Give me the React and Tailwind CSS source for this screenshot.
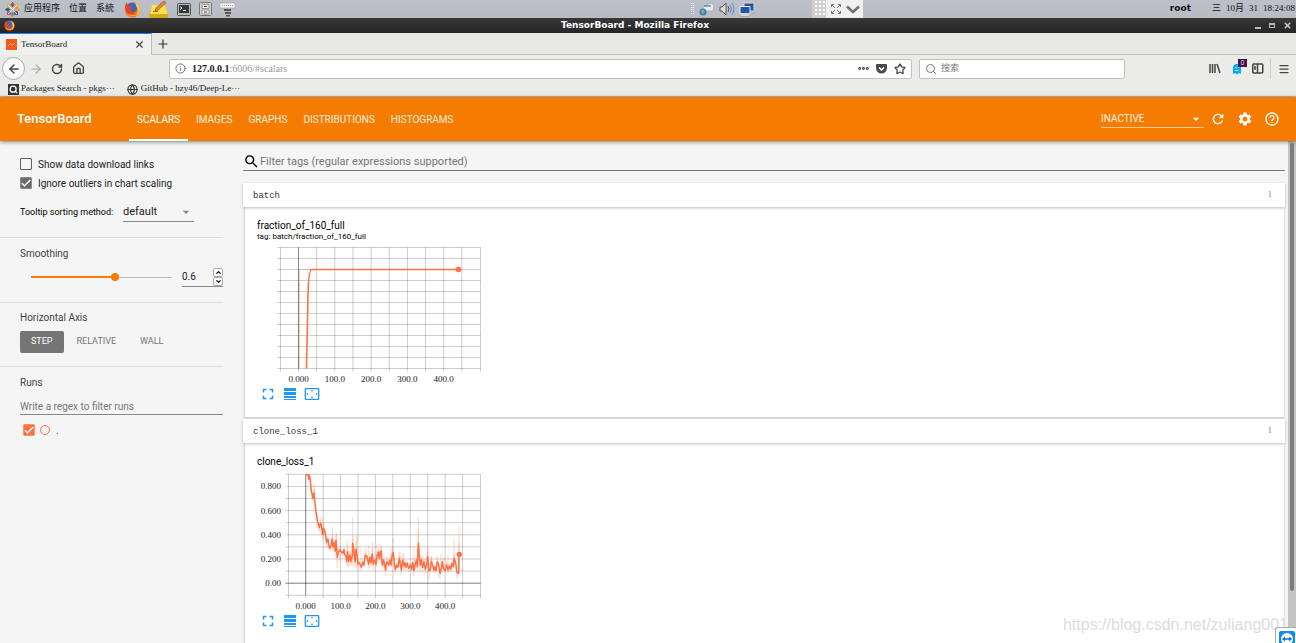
import React, { useState } from 'react';
import clsx from 'clsx';
import {
    MdArrowDropDown,
    MdCheck,
    MdFullscreen,
    MdHelpOutline,
    MdRefresh,
    MdSearch,
    MdSettings,
    MdSettingsOverscan,
} from 'react-icons/md';
import {
    ArrowLeft,
    ArrowRight,
    ChevronDown,
    ChevronUp,
    Ellipsis,
    Globe,
    House,
    Info,
    Menu,
    Plus,
    RotateCw,
    Search,
    Star,
    X,
} from 'lucide-react';

const TABS = ['SCALARS', 'IMAGES', 'GRAPHS', 'DISTRIBUTIONS', 'HISTOGRAMS'];

// Smoothed loss, three units to the pixel
const LOSS = [
    [197, 165], [205, 165], [206, 177], [208, 165], [211, 180], [213, 205], [217, 225], [218, 235],
    [222, 218], [224, 240], [228, 275], [233, 305], [238, 323], [241, 310], [244, 315], [248, 343],
    [250, 325], [253, 330], [257, 345], [260, 367], [264, 357], [266, 375], [270, 385], [274, 375],
    [276, 357], [279, 380], [282, 367], [286, 393], [288, 361], [292, 412], [295, 397], [300, 390],
    [308, 400], [312, 389], [314, 403], [318, 407], [320, 424], [323, 395], [326, 425], [330, 405],
    [333, 425], [337, 405], [338, 370], [342, 393], [345, 425], [348, 387], [351, 403], [354, 432],
    [358, 428], [364, 442], [369, 427], [372, 435], [376, 405], [381, 410], [386, 432], [390, 412],
    [393, 428], [397, 402], [400, 432], [405, 420], [408, 432], [411, 408], [415, 397], [418, 415],
    [421, 395], [424, 393], [425, 420], [428, 435], [431, 420], [437, 450], [440, 425], [446, 435],
    [450, 420], [453, 435], [457, 402], [460, 398], [463, 430], [466, 448], [470, 435], [474, 442],
    [478, 415], [481, 430], [484, 450], [488, 420], [491, 438], [495, 428], [498, 442], [502, 430],
    [506, 445], [512, 435], [515, 448], [518, 428], [522, 452], [526, 430], [530, 420], [532, 440],
    [535, 370], [538, 405], [541, 435], [544, 420], [548, 442], [552, 425], [556, 448], [560, 435],
    [563, 410], [567, 452], [571, 450], [574, 424], [578, 435], [582, 450], [585, 440], [588, 452],
    [592, 425], [596, 435], [600, 460], [605, 440], [607, 425], [610, 445], [615, 452], [620, 435],
    [624, 450], [628, 438], [632, 448], [636, 430], [640, 440], [642, 415], [647, 428], [651, 458],
    [656, 460], [657, 403], [659, 403],
];

// Single-step outliers of the raw series
const SPIKES = [
    [223, 193], [244, 290], [251, 295], [277, 320], [290, 338], [301, 370], [322, 360], [338, 293],
    [350, 345], [363, 385], [386, 375], [398, 365], [411, 370], [424, 375], [458, 353], [480, 398],
    [492, 400], [522, 378], [535, 293], [548, 405], [563, 385], [574, 410], [603, 400], [613, 410],
    [624, 405], [642, 360], [657, 320],
];

const RAW = LOSS.map(([x, y], i) => {
    const prev = i ? LOSS[i - 1][1] : y;
    return [x, Math.max(163, Math.min(478, y + (y - prev) * 0.6))];
});

const toPath = (points) => 'M' + points.map((p) => p.join(' ')).join('L');

function Chart({ left, zeroX, stepX, top, stepY, rows, zeroRow, yLabels = [], label, children }) {
    const right = 223.5;
    const bottom = top + stepY * rows;
    const xs = [left];
    for (let x = zeroX; x < right - 4; x += stepX) xs.push(x);
    xs.push(right);
    return (
        <svg className="mt-1 block" width="228" height="141" role="img" aria-label={label}>
            <g stroke="#000" strokeOpacity="0.2">
                {xs.map((x) => (
                    <path key={x} d={`M${x} ${top}V${bottom + 3}`} />
                ))}
                {Array.from({ length: rows + 1 }, (_, i) => (
                    <path key={i} d={`M${left - 3} ${top + i * stepY}H${right}`} />
                ))}
            </g>
            <g stroke="#000" strokeOpacity="0.35">
                <path d={`M${zeroX} ${top}V${bottom}`} />
                {zeroRow && <path d={`M${left - 3} ${top + zeroRow * stepY}H${right}`} />}
            </g>
            {children}
            <g className="fill-[#222] font-['Liberation_Serif',serif] text-[9px]">
                {['0.000', '100.0', '200.0', '300.0', '400.0'].map((t, i) => (
                    <text key={t} x={zeroX + i * 2 * stepX} y="137" textAnchor="middle">{t}</text>
                ))}
                {yLabels.map((t, i) => (
                    <text key={t} x="24" y={top + (1 + 2 * i) * stepY + 3} textAnchor="end">{t}</text>
                ))}
            </g>
        </svg>
    );
}

function ChartButtons() {
    return (
        <div className="flex h-4 items-center text-[#2196f3]">
            <button aria-label="Toggle fullscreen" className="flex w-[22px] justify-center">
                <MdFullscreen className="size-[18px]" />
            </button>
            <button aria-label="Toggle log scale" className="flex w-[22px] justify-center">
                <svg width="12" height="12" fill="currentColor">
                    <path d="M0 0h12v3H0zM0 4h12v3H0zM0 8h12v2H0zM0 11h12v1H0z" />
                </svg>
            </button>
            <button aria-label="Fit domain to data" className="flex w-[22px] justify-center">
                <MdSettingsOverscan className="size-4" />
            </button>
        </div>
    );
}

function Panel({ name, children, className }) {
    return (
        <section className={className}>
            <h2 className="relative flex h-6 items-center justify-between bg-white pt-[3px] pr-[13px] pl-[10px] font-['Liberation_Mono',monospace] text-[9px] text-[#333] shadow-[0_1px_3px_rgba(0,0,0,0.25)]">
                {name}
                <span className="pb-[3px] font-['Liberation_Serif',serif] text-[#888]">1</span>
            </h2>
            <div className="mx-px h-[210px] border-l border-[#ddd] bg-white pt-3 pl-3 text-black shadow-[0_1px_2px_rgba(0,0,0,0.2)]">
                {children}
            </div>
        </section>
    );
}

function Checkbox({ label, checked = false, accent = false, children }) {
    const [on, setOn] = useState(checked);
    return (
        <label className="flex h-3 items-center text-[10px]">
            <span className="grid size-3 shrink-0">
                <input
                    type="checkbox"
                    aria-label={label}
                    checked={on}
                    onChange={(e) => setOn(e.target.checked)}
                    className={clsx(
                        'col-start-1 row-start-1 size-3 appearance-none rounded-[1px] border',
                        accent ? 'border-[#ff7043] checked:bg-[#ff7043]' : 'border-[#616161] checked:bg-[#6b6b6b]'
                    )}
                />
                {on && <MdCheck className="pointer-events-none col-start-1 row-start-1 size-3 text-white" strokeWidth="1" stroke="currentColor" />}
            </span>
            {children}
        </label>
    );
}

function FirefoxIcon({ size }) {
    return (
        <svg width={size} height={size} viewBox="0 0 16 16">
            <circle cx="8" cy="8.3" r="7.2" fill="#f6701c" />
            <circle cx="7.500" cy="6.500" r="4.800" fill="#2b6cc9" />
            <path d="M11 1.500c5 3 5.500 9 1 12.500-1-2 1.500-3 .8-6.500-.3-2-2.300-3-1.800-6z" fill="#ffcb2e" />
            <path d="M1 5c.500-2 1-3 1.500-3.500L3.500 4l3 .5L8 7l-2 1c.500 2 3 2.500 5 1.500-1 3-4 4-6 3C2 11 .500 8 1 5z" fill="#e8402a" />
            <path d="M2.500 12c3 3 8 3.500 11 0-2 1-4 1.500-6 1.200-2-.2-3.500-.7-5-1.200z" fill="#ffa51f" />
        </svg>
    );
}

function DesktopBar() {
    return (
        <div className="relative flex h-[18px] items-center bg-linear-to-b from-[#bcc0c9] to-[#b9bbc3] font-['Liberation_Serif','Noto_Sans_CJK_SC',sans-serif] text-[9px] text-[#111]">
            <div className="flex items-center pl-[5px]">
                <svg width="15" height="15" viewBox="0 0 15 15">
                    <path d="M7.500 0l2 2.500-2 3-2-3z" fill="#9b3f93" />
                    <path d="M7.500 15l2-2.500-2-3-2 3z" fill="#7d9e2d" />
                    <path d="M0 7.500l2.500-2 3 2-3 2z" fill="#3d4f9c" />
                    <path d="M15 7.500l-2.500-2-3 2 3 2z" fill="#e9a12b" />
                    <path d="M2 2h3.500l1 4.500L2 5.500z" fill="#a4c639" />
                    <path d="M13 2v3.500L8.500 6.500l1-4.500z" fill="#efa724" />
                    <path d="M2 13V9.500l4.500-1-1 4.500z" fill="#b0509a" />
                    <path d="M13 13H9.500l-1-4.500 4.500 1z" fill="#4659a4" />
                    <path d="M3 3l9 9M12 3l-9 9" stroke="#fff" strokeWidth=".8" />
                </svg>
                <button className="ml-1">应用程序</button>
                <button className="ml-[9px]">位置</button>
                <button className="ml-[9px]">系統</button>
            </div>
            <div className="flex items-center gap-2 pl-[10px]">
                <FirefoxIcon size={17} />
                <svg width="20" height="17" viewBox="0 0 20 17">
                    <path d="M3 5h13l3 9v3H0v-3z" fill="#d9a91a" />
                    <path d="M3 4h13l2.500 9H1z" fill="#ffe14d" />
                    <path d="M6 10l1-3 8-7 2 2-8 7z" fill="#f0862d" stroke="#7a4a1a" strokeWidth=".6" />
                    <path d="M4 11c2-2 3 1 5-1" stroke="#555" fill="none" />
                </svg>
                <svg width="14" height="13" viewBox="0 0 14 13">
                    <rect x=".5" y=".5" width="13" height="12" rx="1" fill="#b8bab5" stroke="#555" />
                    <rect x="2" y="2" width="10" height="8" fill="#2f3a3e" />
                    <path d="M3 3.500l2 1.500-2 1.500M6 7.500h3" stroke="#eee" fill="none" />
                </svg>
                <svg width="13" height="14" viewBox="0 0 13 14">
                    <rect x=".5" y=".5" width="12" height="13" rx="1" fill="#cfd1cc" stroke="#777" />
                    <path d="M3 2.500h7v4H3zM3 8h7v4H3z" fill="#f2f2f0" stroke="#999" />
                    <path d="M5 4.500h3M5 10h3" stroke="#444" />
                </svg>
                <svg width="15" height="15" viewBox="0 0 15 15">
                    <rect y="1" width="15" height="5" rx="1" fill="#f4f4f4" stroke="#999" strokeWidth=".6" />
                    <path d="M2 3.500h11" stroke="#c44" strokeDasharray="1 1" strokeOpacity=".6" />
                    <path d="M4 7h7v2H4zM5 10h6v2H5zM6 13h4v1.500H6z" fill="#555" />
                </svg>
            </div>
            <div className="mr-[415px] ml-auto flex items-center gap-1">
                <svg width="4" height="12">
                    <path d="M.5 0v12M2.500 0v12" stroke="#eee" strokeDasharray="1 1" />
                </svg>
                <svg width="16" height="14" viewBox="0 0 16 14">
                    <path d="M4 5l8-4 3 2-1 6H4z" fill="#e8eaea" stroke="#999" strokeWidth=".6" />
                    <path d="M5 4h7" stroke="#5a8fc0" strokeWidth="1.500" />
                    <circle cx="4" cy="10" r="3.500" fill="#3f7fbf" />
                    <path d="M2 9l2-1.500 1.500 2L4 12z" fill="#8fc04a" />
                </svg>
                <svg width="16" height="14" viewBox="0 0 16 14" fill="none">
                    <path d="M1 5h2l4-4v12L3 9H1z" fill="#ddd" stroke="#555" />
                    <path d="M9 4q2 3 0 6" stroke="#555" />
                    <path d="M11 3q3 4 0 8M13 1q4 6 0 12" stroke="#5b8fd0" />
                </svg>
                <svg width="16" height="15" viewBox="0 0 16 15">
                    <path d="M5 1h10v8H5z" fill="#2456a8" stroke="#ddd" />
                    <path d="M1 4.500h10v7H1z" fill="#2456a8" stroke="#eee" />
                    <path d="M1 14h10l-1-2H2zM12 11h4l-1-1h-3z" fill="#eee" stroke="#888" strokeWidth=".5" />
                </svg>
            </div>
            <span className="mr-[21px] font-['DejaVu_Sans',sans-serif] text-[9px] font-bold">root</span>
            <time className="mr-px flex gap-[5px]">
                <span>三</span>
                <span>10月</span>
                <span>31</span>
                <span>18:24:08</span>
            </time>
            {/* Remote-session toolbar hangs over the panel */}
            <div className="absolute top-0 left-[812px] flex h-[18px] w-[51px] items-center gap-[5px] bg-[#f0f0f0] text-[#707070]">
                <svg width="14" height="18">
                    <rect width="14" height="18" fill="#cfcfcf" />
                    <path d="M4 1v16M8 1v16M12 1v16" stroke="#fff" strokeWidth="2" strokeDasharray="2 2" />
                </svg>
                <svg width="10" height="10" viewBox="0 0 10 10" fill="none" stroke="currentColor">
                    <path d="M.5 3V.5H3M7 .5h2.500V3M9.500 7v2.500H7M3 9.500H.5V7M1 1l3 3M9 1L6 4M9 9L6 6M1 9l3-3" />
                </svg>
                <svg width="14" height="9" viewBox="0 0 14 9" fill="none" stroke="currentColor" strokeWidth="2.500">
                    <path d="M1 1.500l6 5.500 6-5.500" />
                </svg>
            </div>
        </div>
    );
}

function BrowserChrome() {
    return (
        <header className="bg-[#ebebea] font-['Liberation_Serif','Noto_Sans_CJK_SC',serif] text-[10px] text-[#222]">
            <div className="flex h-[15px] items-center bg-linear-to-b from-[#383838] to-[#262626] px-1 text-white">
                <FirefoxIcon size={11} />
                <div className="flex-1 text-center font-['DejaVu_Sans',sans-serif] text-[9px] font-bold">
                    TensorBoard - Mozilla Firefox
                </div>
                <div className="flex items-center gap-[8px]">
                    <button aria-label="Minimize" className="h-1.5 w-[6px] border-b-2 border-[#bbb]" />
                    <button aria-label="Maximize" className="h-[5px] w-[6px] border border-t-2 border-[#bbb]" />
                    <button aria-label="Close"><X className="size-[9px] text-[#ccc]" strokeWidth={4} /></button>
                </div>
            </div>

            <div className="flex h-[22px] border-b border-[#c2c2c1] bg-[#e7e7e5]">
                <div className="-mb-px flex w-[152px] items-center border-t border-r border-t-[#0a84ff] border-r-[#bbb] bg-[#f0f0ef] px-[6px]">
                    <svg width="11" height="11" className="mr-[4px]">
                        <rect width="11" height="11" fill="#f4591f" />
                        <path d="M2 7l2.500-2.500L6.500 6 9 4" stroke="#ffb04c" fill="none" />
                    </svg>
                    <span className="flex-1 text-[9px]">TensorBoard</span>
                    <button aria-label="Close tab"><X className="size-[11px] text-[#444]" strokeWidth={2.5} /></button>
                </div>
                <button aria-label="New tab" className="ml-1"><Plus className="size-[14px] text-[#333]" /></button>
            </div>

            <div className="flex h-[27px] items-center pl-[2px] text-[#444]">
                <button aria-label="Back" className="flex size-[23px] items-center justify-center rounded-full border border-[#aaa] bg-[#fafafa]">
                    <ArrowLeft className="size-[14px]" strokeWidth={2.5} />
                </button>
                <button aria-label="Forward" className="ml-[4px] text-[#aaa]"><ArrowRight className="size-[14px]" /></button>
                <button aria-label="Reload" className="ml-[8px]"><RotateCw className="size-[12px]" strokeWidth={2.8} /></button>
                <button aria-label="Home" className="ml-[9px]"><House className="size-[13px]" strokeWidth={2.5} /></button>
                <div className="ml-[84px] flex h-5 flex-1 items-center rounded-[2px] border border-[#c0c0bd] bg-white px-[5px]">
                    <Info className="size-[11px] text-[#666]" />
                    <span className="ml-[6px] font-bold text-[#222]">127.0.0.1</span>
                    <input aria-label="Address" defaultValue=":6006/#scalars" className="min-w-0 flex-1 text-[#999]" />
                    <Ellipsis className="size-[13px]" strokeWidth={3.5} />
                    <svg width="11" height="10" className="ml-[6px]">
                        <path d="M1 0h9q1 0 1 1v3a5.500 5.500 0 0 1-11 0V1q0-1 1-1z" fill="#4a4a4a" />
                        <path d="M3 3.500l2.500 2.500L8 3.500" stroke="#fff" strokeWidth="1.500" fill="none" />
                    </svg>
                    <Star className="ml-[7px] size-[12px]" strokeWidth={2.5} />
                </div>
                <div className="ml-[7px] flex h-5 w-[206px] items-center rounded-[2px] border border-[#c0c0bd] bg-white px-[5px]">
                    <Search className="size-[12px] text-[#777]" />
                    <input aria-label="Search" placeholder="搜索" className="ml-[4px] min-w-0 flex-1 text-[9px] placeholder:text-[#777]" />
                </div>
                <svg width="12" height="11" className="ml-[84px]" stroke="#444" strokeWidth="1.500">
                    <path d="M1 1v9M3.500 1v9M6 1v9M8 1l3 9" />
                </svg>
                <span className="relative ml-[11px]">
                    <svg width="10" height="12">
                        <path d="M1 11V5a4 4 0 0 1 8 0v6L7 10l-2 1.500L3 10z" fill="#00aef0" />
                        <path d="M3.500 4.500h1M6 4.500h1M3.500 7.500h3" stroke="#fff" />
                    </svg>
                    <span className="absolute -top-1 left-[6px] h-2 w-[9px] bg-[#4a1248] text-center font-['Roboto',sans-serif] text-[7px] leading-[8px] text-[#ccc]">0</span>
                </span>
                <svg width="12" height="11" className="ml-[10px]" fill="none" stroke="#444" strokeWidth="1.500">
                    <rect x=".75" y="1" width="10" height="9" rx="1" />
                    <path d="M5.500 1v9M2 4h2M2 6h2" />
                </svg>
                <span className="ml-[6px] h-5 w-px bg-[#ccc]" />
                <button aria-label="Menu" className="mr-[6px] ml-[7px]"><Menu className="size-[12px]" strokeWidth={2.5} /></button>
            </div>

            <nav className="flex h-[15px] items-center border-b border-[#b8b8b8] pl-2 text-[9px]">
                <a href="#pkgs" className="flex items-center gap-[2px]">
                    <span className="bg-[#333] p-px text-white"><Search className="size-[9px]" strokeWidth={3.5} /></span>
                    Packages Search - pkgs···
                </a>
                <a href="#github" className="ml-3 flex items-center gap-[3px]">
                    <Globe className="size-[11px] text-[#333]" strokeWidth={2.5} />
                    GitHub - hzy46/Deep-Le···
                </a>
            </nav>
        </header>
    );
}

function Toolbar() {
    const [active, setActive] = useState('SCALARS');
    return (
        <div className="relative z-10 flex h-11 shrink-0 items-center bg-[#f57c00] text-white shadow-[0_1px_4px_rgba(0,0,0,0.5)]">
            <h1 className="w-[129px] pl-[17px] text-[13px] font-medium">TensorBoard</h1>
            <nav className="flex h-full flex-1 text-[10px]">
                {TABS.map((tab) => (
                    <button
                        key={tab}
                        onClick={() => setActive(tab)}
                        className={clsx(
                            'border-b-2 px-2 pt-[2px]',
                            tab === active ? 'border-white' : 'border-transparent text-white/85'
                        )}
                    >
                        {tab}
                    </button>
                ))}
            </nav>
            <div className="mr-[6px] grid w-[103px] items-center border-b border-white/60">
                <select aria-label="More dashboards" className="col-start-1 row-start-1 h-4 appearance-none text-[10px] text-white/90">
                    <option>INACTIVE</option>
                </select>
                <MdArrowDropDown className="pointer-events-none col-start-1 row-start-1 size-4 justify-self-end" />
            </div>
            <div className="flex gap-[11px] pr-4">
                <button aria-label="Reload data"><MdRefresh className="size-4" /></button>
                <button aria-label="Settings"><MdSettings className="size-4" /></button>
                <button aria-label="Help"><MdHelpOutline className="size-4" /></button>
            </div>
        </div>
    );
}

function Sidebar() {
    const [smoothing, setSmoothing] = useState(0.6);
    const [axis, setAxis] = useState('STEP');
    const nudge = (d) => setSmoothing((s) => Math.min(1, Math.max(0, Math.round((s + d) * 10) / 10)));
    return (
        <aside className="w-[243px] shrink-0 pr-5 text-[10px] text-[#424242]">
            <section className="border-b border-[#ddd] pt-[17px] pb-[15px] pl-5">
                <Checkbox><span className="ml-[6px] text-[#212121]">Show data download links</span></Checkbox>
                <div className="h-[7px]" />
                <Checkbox checked><span className="ml-[6px] text-[#212121]">Ignore outliers in chart scaling</span></Checkbox>
                <div className="mt-[14px] flex items-center text-black">
                    <label htmlFor="sorting" className="w-[103px] text-[9px]">Tooltip sorting method:</label>
                    <div className="grid h-[19px] w-[71px] items-center border-b border-[#888]">
                        <select id="sorting" className="col-start-1 row-start-1 appearance-none text-[11px] text-[#212121]">
                            <option>default</option>
                        </select>
                        <MdArrowDropDown className="pointer-events-none col-start-1 row-start-1 size-4 justify-self-end text-[#888]" />
                    </div>
                </div>
            </section>

            <section className="border-b border-[#ddd] pt-[9px] pb-[15px] pl-5">
                <label htmlFor="smoothing" className="block h-[14px] leading-[14px]">Smoothing</label>
                <div className="mt-[6px] flex h-5 items-center">
                    <div className="ml-[11px] grid w-[141px] items-center">
                        <span className="col-start-1 row-start-1 h-px bg-[#bdbdbd]" />
                        <span
                            className="col-start-1 row-start-1 h-[2px] bg-[#f57c00]"
                            style={{ width: `${smoothing * 100}%` }}
                        />
                        <input
                            id="smoothing"
                            type="range"
                            min="0"
                            max="1"
                            step="0.1"
                            value={smoothing}
                            onChange={(e) => setSmoothing(Number(e.target.value))}
                            className="col-start-1 row-start-1 h-2 w-full appearance-none bg-transparent [&::-webkit-slider-thumb]:size-2 [&::-webkit-slider-thumb]:appearance-none [&::-webkit-slider-thumb]:rounded-full [&::-webkit-slider-thumb]:bg-[#f57c00]"
                        />
                    </div>
                    <div className="ml-[10px] flex h-5 flex-1 items-center border-b border-[#888]">
                        <input
                            type="number"
                            aria-label="Smoothing value"
                            step="0.1"
                            value={smoothing}
                            onChange={(e) => setSmoothing(Number(e.target.value))}
                            className="w-[31px] text-[10px] text-[#212121] [&::-webkit-inner-spin-button]:appearance-none"
                        />
                        <div className="flex flex-col text-black">
                            <button aria-label="Increase" onClick={() => nudge(0.1)} className="flex h-[9px] w-[10px] items-center justify-center rounded-[2px] border border-[#aaa] bg-white">
                                <ChevronUp className="size-[7px]" strokeWidth={4} />
                            </button>
                            <button aria-label="Decrease" onClick={() => nudge(-0.1)} className="flex h-[9px] w-[10px] items-center justify-center rounded-[2px] border border-[#aaa] bg-white">
                                <ChevronDown className="size-[7px]" strokeWidth={4} />
                            </button>
                        </div>
                    </div>
                </div>
            </section>

            <section className="border-b border-[#ddd] pt-2 pb-[13px] pl-5">
                <h3 className="h-[14px] leading-[14px]">Horizontal Axis</h3>
                <div className="mt-[6px] flex gap-[2px] text-[9px]">
                    {['STEP', 'RELATIVE', 'WALL'].map((name) => (
                        <button
                            key={name}
                            onClick={() => setAxis(name)}
                            className={clsx(
                                'h-[22px] rounded-[2px] px-[11px]',
                                name === axis ? 'bg-[#757575] text-white' : 'text-[#757575]'
                            )}
                        >
                            {name}
                        </button>
                    ))}
                </div>
            </section>

            <section className="pt-[9px] pl-5">
                <h3 className="h-[14px] leading-[14px]">Runs</h3>
                <input
                    aria-label="Filter runs"
                    placeholder="Write a regex to filter runs"
                    className="mt-2 block h-[17px] w-full border-b border-[#888] placeholder:text-[#757575]"
                />
                <div className="mt-[9px] pl-[3px]">
                    <Checkbox checked accent label="Show run">
                        <span className="ml-[5px] size-[10px] rounded-full border border-[#ff7043]" />
                        <span className="ml-[6px]">.</span>
                    </Checkbox>
                </div>
            </section>
        </aside>
    );
}

function Dashboard() {
    return (
        <main className="min-w-0 flex-1 pr-[3px]">
            <label className="flex h-[30px] items-end border-b border-[#777]">
                <MdSearch className="size-[17px] text-black" />
                <input
                    aria-label="Filter tags"
                    placeholder="Filter tags (regular expressions supported)"
                    className="h-[18px] min-w-0 flex-1 text-[11px] placeholder:text-[#757575]"
                />
            </label>

            <Panel name="batch" className="mt-3">
                <h3 className="text-[10px] leading-[13px]">fraction_of_160_full</h3>
                <p className="text-[8px] leading-[9px]">tag: batch/fraction_of_160_full</p>
                <Chart label="fraction_of_160_full" left={23.5} zeroX={41.5} stepX={18.15} top={2.5} stepY={11} rows={11}>
                    <path d="M42.500 123V24.500H55" stroke="#ff7043" strokeOpacity="0.35" fill="none" />
                    <path d="M49.500 123.500L51 50Q51.500 24.500 55 24.500H201.500" stroke="#ff7043" strokeWidth="1.600" fill="none" />
                    <circle cx="201.500" cy="24.500" r="2.800" fill="#ff7043" />
                </Chart>
                <ChartButtons />
            </Panel>

            <Panel name="clone_loss_1" className="mt-[2px]">
                <h3 className="text-[10px] leading-[13px]">clone_loss_1</h3>
                <Chart
                    label="clone_loss_1"
                    left={31.5}
                    zeroX={48.7}
                    stepX={17.43}
                    top={2.3}
                    stepY={12.1}
                    rows={10}
                    zeroRow={9}
                    yLabels={['0.800', '0.600', '0.400', '0.200', '0.00']}
                >
                    <g transform="translate(-17 -52) scale(0.3333)" fill="none" stroke="#ff7043" strokeLinejoin="round">
                        <path d={toPath(RAW)} strokeWidth="4" strokeOpacity="0.22" />
                        <path
                            d={SPIKES.map(([x, y]) => `M${x} ${y}V${x < 310 ? y + 55 : 440}`).join('')}
                            strokeWidth="4"
                            strokeOpacity="0.22"
                        />
                        <path d={toPath(LOSS)} strokeWidth="4.5" />
                        <circle cx="658" cy="403" r="8" fill="#ff7043" stroke="none" />
                    </g>
                </Chart>
                <ChartButtons />
            </Panel>
        </main>
    );
}

export default function App() {
    return (
        <div className="relative flex h-screen flex-col overflow-hidden bg-[#f5f5f5] font-['Roboto',sans-serif]">
            <DesktopBar />
            <BrowserChrome />
            <Toolbar />
            <div className="flex min-h-0 flex-1">
                <Sidebar />
                <Dashboard />
                <div className="w-2 shrink-0 bg-[#c4c4c4] px-[2px] pt-[2px]">
                    <div className="h-[448px] rounded-full bg-[#7b7f80]" />
                </div>
            </div>

            <p className="pointer-events-none absolute right-[8px] bottom-[8px] font-['Liberation_Sans',sans-serif] text-[16px] leading-5 text-[#dcdcdc]">
                https://blog.csdn.net/zuliang001
            </p>
            <div className="absolute right-0 bottom-0 flex h-4 w-[21px] items-end justify-end rounded-tl-[3px] border-t border-l border-[#aaa] bg-white">
                <svg width="17" height="12" viewBox="0 0 17 12">
                    <rect width="16" height="16" rx="2" fill="#0e8ee9" />
                    <circle cx="8" cy="8" r="6" fill="#fff" />
                    <path d="M3 8l3-2.500v1.700h4V5.500L13 8l-3 2.500V8.800H6v1.700z" fill="#0e6fd0" />
                </svg>
            </div>
        </div>
    );
}
